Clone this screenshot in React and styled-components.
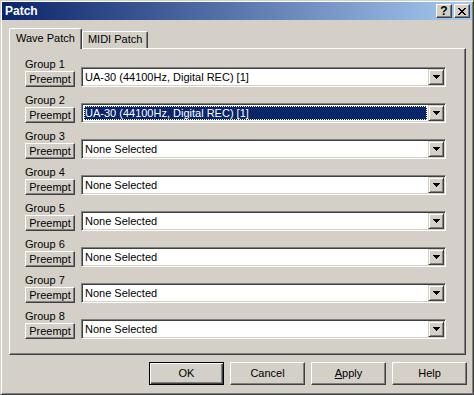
import React from 'react'
import styled, { createGlobalStyle } from 'styled-components'

//----------- Colours ------------------//
const face = '#D4D0C8'
const shadow = '#808080'
const darkShadow = '#404040'
const navy = '#0A246A'

//----------- Styling ------------------//
const GlobalStyle = createGlobalStyle`
  * { box-sizing: border-box; }
  html, body {
    margin: 0;
    padding: 0;
    background: ${face};
  }
  body {
    font-family: "Liberation Sans", Arial, sans-serif;
    font-size: 11px;
    color: #000;
  }
`

const Window = styled.div`
  width: 474px;
  height: 395px;
  display: flex;
  flex-direction: column;
  padding: 1px;
  background: ${face};
  border: 1px solid;
  border-color: ${face} ${darkShadow} ${darkShadow} ${face};
  box-shadow: inset 1px 1px #fff, inset -1px -1px ${shadow};
`

const TitleBar = styled.div`
  height: 18px;
  display: flex;
  align-items: center;
  padding: 0 2px 0 3px;
  background: linear-gradient(to right, ${navy}, #A6CAF0);
`

const Title = styled.span`
  flex: 1;
  color: #fff;
  font-weight: bold;
  font-size: 12px;
  line-height: 18px;
`

const CaptionButtons = styled.div`
  display: flex;
  gap: 2px;
`

const CaptionButton = styled.div`
  width: 16px;
  height: 14px;
  display: flex;
  align-items: center;
  justify-content: center;
  background: ${face};
  border: 1px solid;
  border-color: #fff ${darkShadow} ${darkShadow} #fff;
  box-shadow: inset -1px -1px ${shadow};
  font-weight: bold;
  font-size: 12px;
  line-height: 12px;
`

const Body = styled.div`
  flex: 1;
  display: flex;
  flex-direction: column;
  padding: 8px 5px 0 7px;
`

const TabList = styled.div`
  display: flex;
  align-items: flex-end;
  height: 20px;
`

const Tab = styled.div`
  position: relative;
  z-index: ${p => (p.$active ? 1 : 0)};
  height: ${p => (p.$active ? '21px' : '17px')};
  margin-bottom: ${p => (p.$active ? '-1px' : '0')};
  padding: ${p => (p.$active ? '2px 6px 0' : '0 5px')};
  line-height: 15px;
  background: ${face};
  border-top: 1px solid #fff;
  border-left: 1px solid #fff;
  border-right: 1px solid ${darkShadow};
  border-top-left-radius: 2px;
  border-top-right-radius: 2px;
  box-shadow: inset -1px 0 ${shadow};
  white-space: nowrap;
`

const Panel = styled.div`
  width: 457px;
  height: 307px;
  display: flex;
  flex-direction: column;
  gap: 7px;
  padding: 9px 0 0 15px;
  border: 1px solid;
  border-color: #fff ${darkShadow} ${darkShadow} #fff;
  box-shadow: inset -1px -1px ${shadow};
`

const Group = styled.div`
  display: flex;
  flex-direction: column;
`

const GroupLabel = styled.div`
  height: 9px;
  line-height: 12px;
  white-space: nowrap;
`

const Row = styled.div`
  height: 20px;
  display: flex;
  align-items: flex-end;
  gap: 6px;
`

const Button = styled.div`
  width: ${p => p.$width || 75}px;
  height: ${p => p.$height || 23}px;
  line-height: ${p => (p.$height || 23) - 2}px;
  text-align: center;
  background: ${face};
  border: 1px solid;
  border-color: ${p => (p.$default ? '#000' : `#fff ${darkShadow} ${darkShadow} #fff`)};
  box-shadow: ${p =>
    p.$default
      ? `inset 1px 1px #fff, inset -1px -1px ${darkShadow}, inset -2px -2px ${shadow}`
      : `inset -1px -1px ${shadow}`};
  white-space: nowrap;

  u {
    text-decoration: underline;
  }
`

const Combo = styled.div`
  width: 365px;
  height: 20px;
  display: flex;
  padding: 1px;
  background: #fff;
  border: 1px solid;
  border-color: ${shadow} #fff #fff ${shadow};
  box-shadow: inset 1px 1px ${darkShadow}, inset -1px -1px ${face};
`

const ComboValue = styled.div`
  flex: 1;
  margin: ${p => (p.$selected ? '1px' : '0')};
  padding: ${p => (p.$selected ? '0' : '0 2px')};
  line-height: ${p => (p.$selected ? '12px' : '16px')};
  background: ${p => (p.$selected ? navy : 'transparent')};
  color: ${p => (p.$selected ? '#fff' : '#000')};
  border: ${p => (p.$selected ? '1px dotted #fff' : 'none')};
  white-space: nowrap;
  overflow: hidden;
`

const DropButton = styled.div`
  width: 16px;
  height: 16px;
  display: flex;
  align-items: center;
  justify-content: center;
  background: ${face};
  border: 1px solid;
  border-color: ${face} ${darkShadow} ${darkShadow} ${face};
  box-shadow: inset 1px 1px #fff, inset -1px -1px ${shadow};
`

const Footer = styled.div`
  display: flex;
  justify-content: flex-end;
  gap: 6px;
  margin-top: 7px;
`
//--------------------------------------//

const groups = [
  { name: 'Group 1', value: 'UA-30 (44100Hz, Digital REC) [1]' },
  { name: 'Group 2', value: 'UA-30 (44100Hz, Digital REC) [1]', selected: true },
  { name: 'Group 3', value: 'None Selected' },
  { name: 'Group 4', value: 'None Selected' },
  { name: 'Group 5', value: 'None Selected' },
  { name: 'Group 6', value: 'None Selected' },
  { name: 'Group 7', value: 'None Selected' },
  { name: 'Group 8', value: 'None Selected' },
]

function Arrow() {
  return (
    <svg width="7" height="4" viewBox="0 0 7 4" shapeRendering="crispEdges">
      <path d="M0 0h7v1H0zM1 1h5v1H1zM2 2h3v1H2zM3 3h1v1H3z" fill="#000" />
    </svg>
  )
}

function CloseGlyph() {
  return (
    <svg width="8" height="7" viewBox="0 0 8 7" shapeRendering="crispEdges">
      <path
        d="M0 0h2v1H0zM6 0h2v1H6zM1 1h2v1H1zM5 1h2v1H5zM2 2h4v1H2zM3 3h2v1H3zM2 4h4v1H2zM1 5h2v1H1zM5 5h2v1H5zM0 6h2v1H0zM6 6h2v1H6z"
        fill="#000"
      />
    </svg>
  )
}

export default function App() {
  return (
    <>
      <GlobalStyle />
      <Window>
        <TitleBar>
          <Title>Patch</Title>
          <CaptionButtons>
            <CaptionButton>?</CaptionButton>
            <CaptionButton>
              <CloseGlyph />
            </CaptionButton>
          </CaptionButtons>
        </TitleBar>
        <Body>
          <TabList>
            <Tab $active>Wave Patch</Tab>
            <Tab>MIDI Patch</Tab>
          </TabList>
          <Panel>
            {groups.map(g => (
              <Group key={g.name}>
                <GroupLabel>{g.name}</GroupLabel>
                <Row>
                  <Button $width={50} $height={16}>Preempt</Button>
                  <Combo>
                    <ComboValue $selected={g.selected}>{g.value}</ComboValue>
                    <DropButton>
                      <Arrow />
                    </DropButton>
                  </Combo>
                </Row>
              </Group>
            ))}
          </Panel>
          <Footer>
            <Button $default>OK</Button>
            <Button>Cancel</Button>
            <Button><u>A</u>pply</Button>
            <Button>Help</Button>
          </Footer>
        </Body>
      </Window>
    </>
  )
}
